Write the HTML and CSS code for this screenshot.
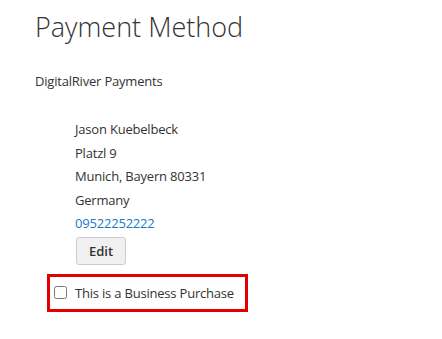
FILE: index.html
```html
<!DOCTYPE html>
<html>
<head>
<meta charset="utf-8">
<link rel="stylesheet" href="styles.css">
</head>
<body>
<div class="step">
  <h1 class="step-title">Payment Method</h1>
  <div class="method-title">DigitalRiver Payments</div>
  <div class="billing">
    <div class="address">
      <div>Jason Kuebelbeck</div>
      <div>Platzl 9</div>
      <div>Munich, Bayern 80331</div>
      <div>Germany</div>
      <div><a class="phone" href="#">09522252222</a></div>
    </div>
    <button class="edit" type="button">Edit</button>
  </div>
  <div class="business">
    <label class="business-label"><input type="checkbox" class="cb"><span>This is a Business Purchase</span></label>
  </div>
</div>
</body>
</html>
```

FILE: styles.css
```css
html, body {
  margin: 0;
  padding: 0;
  background: #fff;
}
body {
  font-family: "Open Sans", "Liberation Sans", sans-serif;
  font-size: 13px;
  letter-spacing: -0.2px;
  color: #333;
}
.step {
  padding: 11px 0 0 35px;
}
.step-title {
  margin: 0;
  font-size: 27px;
  font-weight: 300;
  line-height: 32px;
  letter-spacing: 0;
  color: #333;
}
.method-title {
  margin-top: 28px;
  line-height: 20px;
}
.billing {
  padding-left: 40px;
  margin-top: 27px;
}
.address {
  line-height: 23.5px;
}
.phone {
  color: #1979c3;
  text-decoration: none;
}
.edit {
  display: block;
  margin: 1px 0 0 1px;
  font-family: "Open Sans", "Liberation Sans", sans-serif;
  font-size: 13px;
  letter-spacing: 0;
  font-weight: 600;
  color: #333;
  background: #f0f0f0;
  border: 1px solid #cdcdcd;
  border-radius: 3px;
  height: 28px;
  padding: 0 12px;
  line-height: 26px;
}
.business {
  margin-top: 9px;
  margin-left: 12px;
  width: 195px;
  height: 32px;
  border: 3px solid #e00000;
  display: flex;
  align-items: center;
  white-space: nowrap;
}
.business-label {
  display: flex;
  align-items: center;
}
.cb {
  margin: 0 0 0 4px;
  width: 13px;
  height: 13px;
}
.business-label span {
  margin-left: 8px;
}
```
